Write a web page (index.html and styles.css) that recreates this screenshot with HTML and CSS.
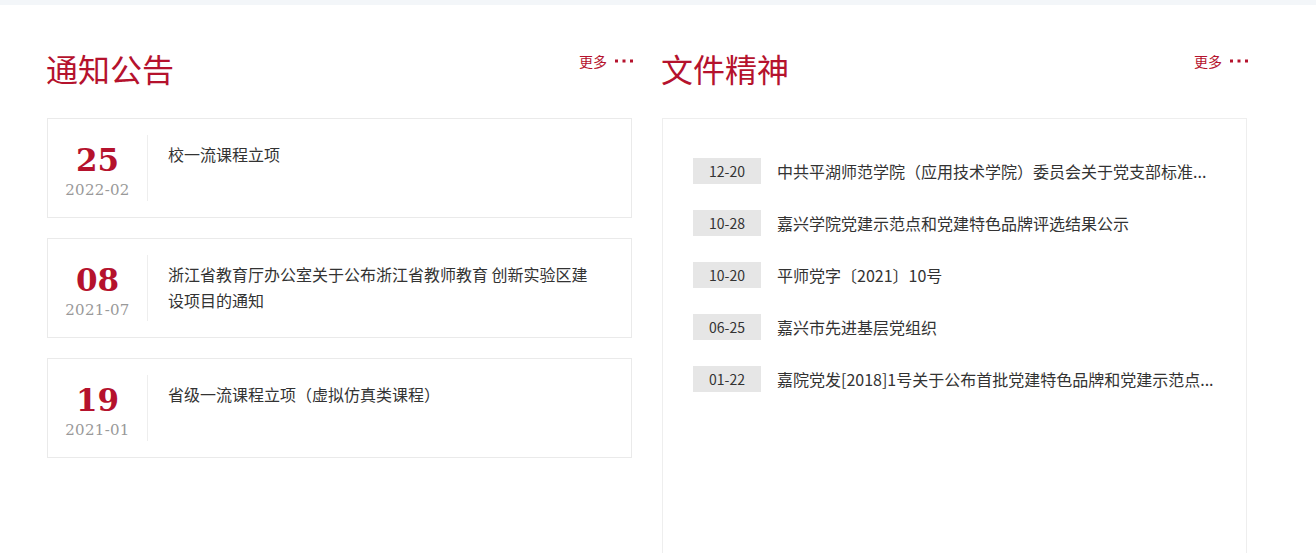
FILE: index.html
```html
<!DOCTYPE html>
<html lang="zh-CN">
<head>
<meta charset="utf-8">
<title>通知公告 文件精神</title>
<link rel="stylesheet" href="styles.css">
</head>
<body>
<div class="topbar"></div>
<main class="wrap">
  <section class="col">
    <div class="head">
      <h2 class="title">通知公告</h2>
      <a class="more" href="#">更多 <svg class="dots" width="18" height="4" viewBox="0 0 18 4"><rect x="0" y="0.5" width="3" height="3"/><rect x="7.5" y="0.5" width="3" height="3"/><rect x="15" y="0.5" width="3" height="3"/></svg></a>
    </div>
    <div class="cards">
      <a class="card" href="#">
        <div class="date"><span class="day">25</span><span class="ym">2022-02</span></div>
        <div class="ctext">校一流课程立项</div>
      </a>
      <a class="card" href="#">
        <div class="date"><span class="day">08</span><span class="ym">2021-07</span></div>
        <div class="ctext">浙江省教育厅办公室关于公布浙江省教师教育 创新实验区建设项目的通知</div>
      </a>
      <a class="card" href="#">
        <div class="date"><span class="day">19</span><span class="ym">2021-01</span></div>
        <div class="ctext">省级一流课程立项（虚拟仿真类课程）</div>
      </a>
    </div>
  </section>
  <section class="col">
    <div class="head">
      <h2 class="title">文件精神</h2>
      <a class="more" href="#">更多 <svg class="dots" width="18" height="4" viewBox="0 0 18 4"><rect x="0" y="0.5" width="3" height="3"/><rect x="7.5" y="0.5" width="3" height="3"/><rect x="15" y="0.5" width="3" height="3"/></svg></a>
    </div>
    <ul class="box">
      <li class="row"><span class="badge">12-20</span><span class="rtext">中共平湖师范学院（应用技术学院）委员会关于党支部标准...</span></li>
      <li class="row"><span class="badge">10-28</span><span class="rtext">嘉兴学院党建示范点和党建特色品牌评选结果公示</span></li>
      <li class="row"><span class="badge">10-20</span><span class="rtext">平师党字〔2021〕10号</span></li>
      <li class="row"><span class="badge">06-25</span><span class="rtext">嘉兴市先进基层党组织</span></li>
      <li class="row"><span class="badge">01-22</span><span class="rtext">嘉院党发[2018]1号关于公布首批党建特色品牌和党建示范点...</span></li>
    </ul>
  </section>
</main>
</body>
</html>
```
FILE: styles.css
```css
* { box-sizing: border-box; }
html, body { margin: 0; padding: 0; background: #fff; }
body {
  font-family: "Noto Sans CJK SC", "Noto Sans", sans-serif;
  color: #333;
  overflow: hidden;
}
a { text-decoration: none; color: inherit; }
.topbar { height: 5px; background: #f3f6f9; }
.wrap {
  display: flex;
  gap: 30px;
  padding: 43px 0 0 47px;
}
.col { width: 585px; flex: none; }
.head {
  display: flex;
  justify-content: space-between;
  align-items: flex-start;
  height: 40px;
  margin-bottom: 30px;
}
.title {
  margin: 0;
  font-size: 32px;
  line-height: 40px;
  font-weight: 400;
  color: #b5122d;
  margin-left: -1px;
}
.more {
  display: flex;
  align-items: center;
  gap: 8px;
  margin-top: 3px;
  margin-right: -1px;
  font-size: 14px;
  line-height: 20px;
  color: #b5122d;
}
.dots { fill: #b5122d; display: block; }
.cards { display: flex; flex-direction: column; gap: 20px; }
.card {
  display: flex;
  height: 100px;
  border: 1px solid #eaeaea;
  background: #fff;
}
.date {
  width: 100px;
  flex: none;
  margin: 16px 0;
  border-right: 1px solid #eeeeee;
  display: flex;
  flex-direction: column;
  align-items: center;
  font-family: "DejaVu Serif", "Liberation Serif", serif;
}
.day {
  font-size: 31px;
  line-height: 32px;
  font-weight: 700;
  color: #b5122d;
  margin-top: 9px;
}
.ym {
  font-size: 15px;
  line-height: 20px;
  color: #999;
  margin-top: 4px;
  letter-spacing: 0.3px;
}
.ctext {
  padding: 22px 40px 0 20px;
  font-size: 16px;
  line-height: 26px;
  color: #333;
}
.box {
  list-style: none;
  margin: 0;
  height: 460px;
  border: 1px solid #eeeeee;
  padding: 39px 20px 0 30px;
  display: flex;
  flex-direction: column;
  gap: 26px;
}
.row {
  display: flex;
  align-items: center;
  height: 26px;
  gap: 16px;
}
.badge {
  flex: none;
  width: 68px;
  height: 26px;
  background: #e6e6e6;
  font-size: 14px;
  line-height: 26px;
  text-align: center;
  color: #333;
}
.rtext {
  font-size: 16px;
  line-height: 26px;
  color: #333;
  white-space: nowrap;
}
```
